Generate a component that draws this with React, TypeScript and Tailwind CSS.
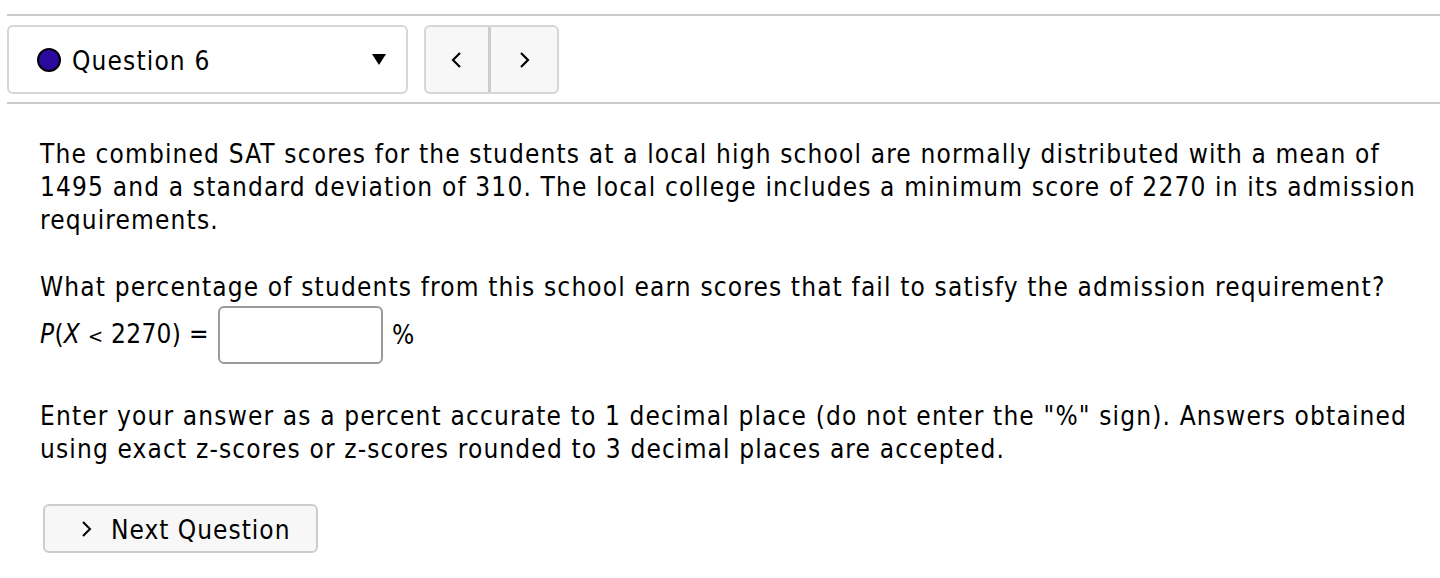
import React from "react";

const font = { fontFamily: '"DejaVu Sans Condensed", "DejaVu Sans", sans-serif', fontStretch: "condensed" as const };

export default function App() {
  return (
    <div className="w-full h-[578px] bg-white text-black overflow-hidden text-[26px] leading-[33px] tracking-[1.15px]" style={font}>
      <div className="mt-[14px] ml-[7px] h-[2px] bg-[#cccccc]" />
      <div className="mt-[9px] ml-[7px] flex items-stretch h-[69px]">
        <div className="w-[401px] border-2 border-[#d6d6d6] rounded-[6px] flex items-center pl-[28px] pr-[20px]">
          <span className="w-[24px] h-[24px] rounded-full bg-[#2a0a9e] border-2 border-black mr-[11px]" />
          <span className="flex-1 pt-[3px]">Question 6</span>
          <svg width="14" height="11" viewBox="0 0 14 11"><polygon points="0,0 14,0 7,11" fill="#000" /></svg>
        </div>
        <div className="ml-[16px] w-[135px] border-2 border-[#d6d6d6] rounded-[6px] bg-[#f7f7f7] flex">
          <div className="w-[65px] flex items-center justify-center border-r-[3px] border-[#cccccc]">
            <svg width="12" height="16" viewBox="0 0 12 16"><polyline points="9,1 2,8 9,15" fill="none" stroke="#000" strokeWidth="2.2" /></svg>
          </div>
          <div className="flex-1 flex items-center justify-center">
            <svg width="12" height="16" viewBox="0 0 12 16"><polyline points="3,1 10,8 3,15" fill="none" stroke="#000" strokeWidth="2.2" /></svg>
          </div>
        </div>
      </div>
      <div className="mt-[8px] ml-[7px] h-[2px] bg-[#cccccc]" />
      <div className="pl-[40px] whitespace-nowrap">
        <p className="mt-[34px]">
          The combined SAT scores for the students at a local high school are normally distributed with a mean of<br />
          1495 and a standard deviation of 310. The local college includes a minimum score of 2270 in its admission<br />
          requirements.
        </p>
        <p className="mt-[34px]">What percentage of students from this school earn scores that fail to satisfy the admission requirement?</p>
        <div className="mt-[2px] flex items-center h-[58px]">
          <span className="w-[176px] tracking-[0.3px]"><i>P</i>(<i>X</i> <span className="text-[20px]">&lt;</span> 2270) =</span>
          <span className="ml-[2px] w-[165px] h-[58px] border-2 border-[#9a9a9a] rounded-[6px] bg-white" />
          <span className="ml-[9px]">%</span>
        </div>
        <p className="mt-[36px]">
          Enter your answer as a percent accurate to 1 decimal place (do not enter the "%" sign). Answers obtained<br />
          using exact z-scores or z-scores rounded to 3 decimal places are accepted.
        </p>
        <button className="mt-[38px] ml-[3px] w-[275px] h-[49px] border-2 border-[#cccccc] rounded-[6px] bg-[#f7f7f7] flex items-center pl-[36px] tracking-[1px]">
          <svg width="11" height="16" viewBox="0 0 11 16" className="mr-[19px]"><polyline points="2,1 9,8 2,15" fill="none" stroke="#000" strokeWidth="2" /></svg>
          <span className="pt-[3px]">Next Question</span>
        </button>
      </div>
    </div>
  );
}
